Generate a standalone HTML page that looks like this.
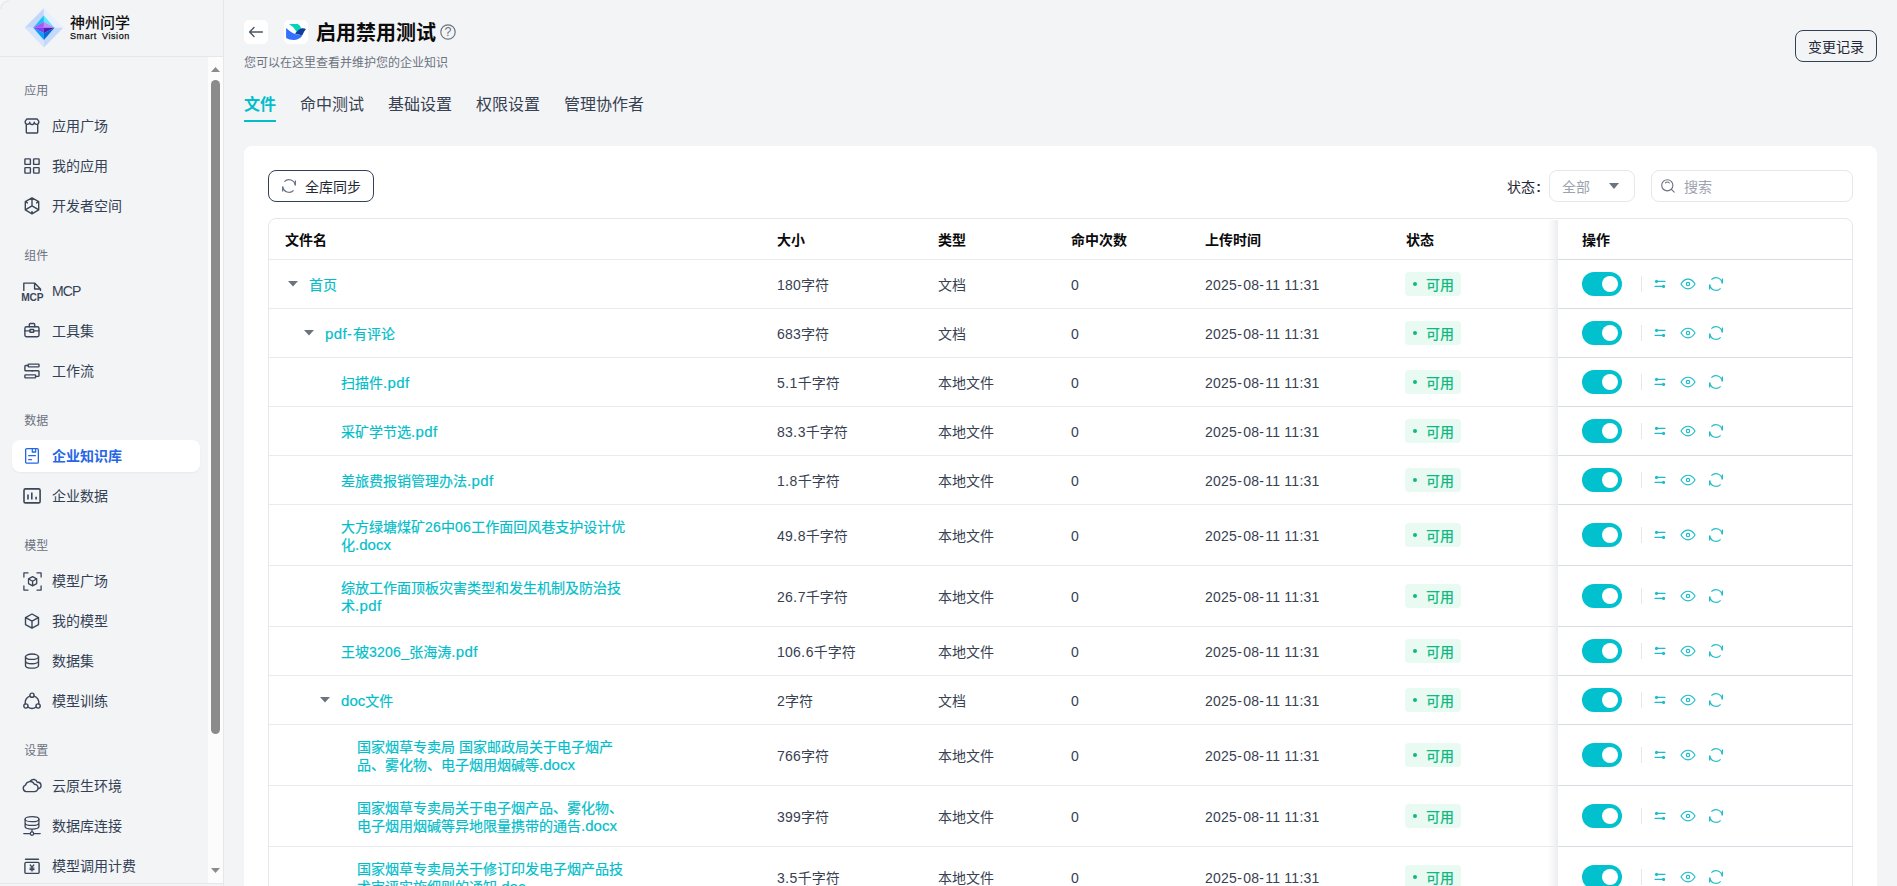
<!DOCTYPE html>
<html lang="zh-CN"><head><meta charset="utf-8"><title>企业知识库 - 启用禁用测试</title>
<style>
*{box-sizing:border-box;margin:0;padding:0}
html,body{width:1897px;height:886px;overflow:hidden;background:#f3f4f6}
body{font-family:"Liberation Sans", "Noto Sans CJK SC", sans-serif;font-size:14px;color:#374151;position:relative}
.a{position:absolute;white-space:nowrap}
svg{display:block;overflow:visible}
.sec{color:#6b7280;font-size:12px;line-height:18px;left:24.3px}
.it{left:52px;font-size:14px;line-height:20px;color:#334155}
.ic{left:24px;width:16px;height:16px;color:#374151}
.tab{font-size:16px;line-height:24px;color:#374151;top:93px}
.th{font-weight:700;color:#0a0a0a;line-height:20px;top:230px;font-size:14px}
.td{line-height:20px;color:#374151}
.nm{line-height:18px;color:#02beca;-webkit-text-stroke:.2px #02beca}
.hl{left:269px;width:1289px;height:1px;background:#e8eaee}
.hr{left:1558px;width:294px;height:1px;background:#d8dbe2}
.tag{left:1405px;width:56px;height:24px;border-radius:4px;background:#e9faf3;color:#10b981;line-height:24px;font-size:14px;font-weight:500}
.tag i{position:absolute;left:8px;top:10px;width:4px;height:4px;border-radius:50%;background:#10b981}
.tag span{position:absolute;left:21px;top:.5px}
.sw{left:1582px;width:40px;height:24px;border-radius:12px;background:#00c1cd}
.sw i{position:absolute;left:20px;top:4px;width:16px;height:16px;border-radius:50%;background:#fff}
.dv{left:1641px;width:1px;height:16px;background:#e5e7eb}
.oi{width:16px;height:16px;color:#1cbcc8}
.car{width:10px;height:5.6px}
.lc{font-size:15px;letter-spacing:.38px}
.lo{letter-spacing:.05px}
.dg{letter-spacing:.25px}
.hy{letter-spacing:1.3px}
</style></head>
<body>
<aside>
<div class="a" style="left:0;top:0;width:224px;height:886px;border-right:1px solid #e5e7eb"></div>
<div class="a" style="left:0;top:56px;width:223px;height:1px;background:#e5e7eb"></div>
<div class="a" style="left:0;top:883px;width:223px;height:1px;background:#e5e7eb"></div>
<div class="a" style="left:0;top:0;width:9px;height:9px;background:radial-gradient(circle at 9px 9px,#f3f4f6 7px,#e6e6e7 8px,#f7f7f7 9.2px)"></div>
<svg class="a" style="left:24px;top:8px" width="40" height="40" viewBox="24 8 40 40">
<polygon points="24.6,27.8 43.9,8.2 43.9,27.8" fill="#c3d6fc"/>
<polygon points="43.9,8.2 63.3,27.8 43.9,27.8" fill="#e8effd"/>
<polygon points="24.6,27.8 43.9,27.8 43.9,47.4" fill="#d6e5fd"/>
<polygon points="43.9,27.8 63.3,27.8 43.9,47.4" fill="#c5d9fc"/>
<polygon points="43.9,15.6 33.2,27.8 43.9,21.8" fill="#0fc3f2"/>
<polygon points="43.9,15.6 54.5,27.8 43.9,21.8" fill="#5ee9fb"/>
<polygon points="33.2,27.8 43.9,21.8 43.9,27.8" fill="#a955f7"/>
<polygon points="43.9,21.8 54.5,27.8 43.9,27.8" fill="#bf8afb"/>
<polygon points="33.2,27.8 43.9,27.8 43.9,33.2" fill="#7c43f0"/>
<polygon points="43.9,27.8 54.5,27.8 43.9,33.2" fill="#4a1fb4"/>
<polygon points="33.2,27.8 43.9,33.2 43.9,39.9" fill="#0a9ff5"/>
<polygon points="43.9,33.2 54.5,27.8 43.9,39.9" fill="#0868d8"/>
</svg>
<div class="a" style="left:70px;top:12.5px;font-size:15px;line-height:20px;font-weight:500;color:#111">神州问学</div>
<div class="a" style="left:70px;top:30px;font-size:9px;line-height:12px;color:#111;letter-spacing:0.58px;word-spacing:2px;-webkit-text-stroke:.25px #111">Smart Vision</div>
<div class="a" style="left:208px;top:57px;width:15px;height:826px;background:#fcfcfc"></div>
<svg class="a" style="left:211px;top:67px" width="9" height="5" viewBox="0 0 9 5"><path d="M0 5 L4.5 0 L9 5Z" fill="#8b8b8b"/></svg>
<svg class="a" style="left:211px;top:868px" width="9" height="5" viewBox="0 0 9 5"><path d="M0 0 L4.5 5 L9 0Z" fill="#8b8b8b"/></svg>
<div class="a" style="left:211px;top:80px;width:9px;height:654px;border-radius:4.5px;background:#8b8b8b"></div>
<div class="a sec" style="top:82px">应用</div>
<div class="a sec" style="top:247px">组件</div>
<div class="a sec" style="top:412px">数据</div>
<div class="a sec" style="top:537px">模型</div>
<div class="a sec" style="top:742px">设置</div>
<div class="a" style="left:12px;top:440px;width:188px;height:32px;border-radius:8px;background:#fff;box-shadow:0 1px 2px rgba(0,0,0,.05)"></div>
<svg class="a" style="left:24px;top:118px;color:#3b4659" width="16" height="16" viewBox="0 0 16 16"><path d="M1.2 3.3 L2.3 1.6 Q2.6 .95 3.3 .95 H12.7 Q13.4 .95 13.7 1.6 L14.8 3.3 V4.3 A2.27 2.27 0 0 1 10.27 4.3 A2.27 2.27 0 0 1 5.73 4.3 A2.27 2.27 0 0 1 1.2 4.3Z M2.3 6.4 V14.3 Q2.3 15 3 15 H13 Q13.7 15 13.7 14.3 V6.4" fill="none" stroke="currentColor" stroke-width="1.4" stroke-linecap="round" stroke-linejoin="round"/></svg>
<div class="a it" style="top:116px">应用广场</div>
<svg class="a" style="left:24px;top:158px;color:#3b4659" width="16" height="16" viewBox="0 0 16 16"><rect x=".9" y=".9" width="5.5" height="5.5" rx=".5" fill="none" stroke="currentColor" stroke-width="1.4" stroke-linecap="round" stroke-linejoin="round"/><rect x="9.6" y=".9" width="5.5" height="5.5" rx=".5" fill="none" stroke="currentColor" stroke-width="1.4" stroke-linecap="round" stroke-linejoin="round"/><rect x=".9" y="9.6" width="5.5" height="5.5" rx=".5" fill="none" stroke="currentColor" stroke-width="1.4" stroke-linecap="round" stroke-linejoin="round"/><rect x="9.6" y="9.6" width="5.5" height="5.5" rx=".5" fill="none" stroke="currentColor" stroke-width="1.4" stroke-linecap="round" stroke-linejoin="round"/></svg>
<div class="a it" style="top:156px">我的应用</div>
<svg class="a" style="left:24px;top:197.1px;color:#3b4659" width="16" height="17.6" viewBox="0 0 16 17.6"><path d="M8 .8 L14.7 4.7 V12.9 L8 16.8 L1.3 12.9 V4.7Z M8 .8 V8.8 M8 8.8 L1.6 12.6 M8 8.8 L14.4 12.6 M8 16.8 V14.4 M1.3 4.7 L3.4 5.9 M14.7 4.7 L12.6 5.9" fill="none" stroke="currentColor" stroke-width="1.4" stroke-linecap="round" stroke-linejoin="round"/></svg>
<div class="a it" style="top:196px">开发者空间</div>
<svg class="a" style="left:21px;top:282px;color:#3b4659" width="23" height="20" viewBox="0 0 23 20"><path d="M2.8 8.4 V1.1 H13.6 L19.5 7 V8.4 M13.6 1.1 V7 H19.5" fill="none" stroke="currentColor" stroke-width="1.4" stroke-linecap="round" stroke-linejoin="round"/><text x="11.3" y="19" text-anchor="middle" font-size="10.2" font-weight="700" fill="currentColor" font-family="&quot;Liberation Sans&quot;, &quot;Noto Sans CJK SC&quot;, sans-serif" letter-spacing="-0.15">MCP</text></svg>
<div class="a it" style="top:281px;letter-spacing:-.9px">MCP</div>
<svg class="a" style="left:24px;top:322px;color:#3b4659" width="16" height="16" viewBox="0 0 16 16"><rect x=".9" y="4.8" width="14.1" height="9.9" rx="1.6" fill="none" stroke="currentColor" stroke-width="1.4" stroke-linecap="round" stroke-linejoin="round"/><path d="M5.3 4.8 V2.6 A1.1 1.1 0 0 1 6.4 1.5 H9.6 A1.1 1.1 0 0 1 10.7 2.6 V4.8 M.9 8.9 H5.9 M9.7 8.9 H15" fill="none" stroke="currentColor" stroke-width="1.4" stroke-linecap="round" stroke-linejoin="round"/><rect x="5.9" y="7.5" width="3.8" height="2.8" rx=".5" fill="none" stroke="currentColor" stroke-width="1.4" stroke-linecap="round" stroke-linejoin="round"/></svg>
<div class="a it" style="top:321px">工具集</div>
<svg class="a" style="left:24px;top:363px;color:#3b4659" width="16" height="16" viewBox="0 0 16 16"><rect x="4.2" y="1.1" width="10.8" height="2.8" rx=".6" fill="none" stroke="currentColor" stroke-width="1.4" stroke-linecap="round" stroke-linejoin="round"/><rect x=".9" y="11.9" width="10.7" height="3" rx=".6" fill="none" stroke="currentColor" stroke-width="1.4" stroke-linecap="round" stroke-linejoin="round"/><path d="M4.2 2.5 H1.7 A.8 .8 0 0 0 .9 3.3 V7 A.8 .8 0 0 0 1.7 7.8 H14.2 A.8 .8 0 0 1 15 8.6 V12.6 A.8 .8 0 0 1 14.2 13.4 H11.6" fill="none" stroke="currentColor" stroke-width="1.4" stroke-linecap="round" stroke-linejoin="round"/><circle cx="8.2" cy="7.8" r=".9" fill="currentColor"/></svg>
<div class="a it" style="top:361px">工作流</div>
<svg class="a" style="left:24px;top:447px;color:#2466e6" width="16" height="18" viewBox="0 0 16 18"><rect x="1.65" y="1.55" width="12.7" height="14.6" rx="1.2" fill="none" stroke="currentColor" stroke-width="1.3" stroke-linecap="round" stroke-linejoin="round"/><path d="M8.3 1.6 V5 H11.6 V1.6 M4.7 8.7 H11.4 M4.7 12.7 H7.5" fill="none" stroke="currentColor" stroke-width="1.3" stroke-linecap="round" stroke-linejoin="round"/></svg>
<div class="a it" style="top:446px;color:#2466e6;font-weight:700">企业知识库</div>
<svg class="a" style="left:23px;top:488px;color:#3b4659" width="18" height="16" viewBox="0 0 18 16"><rect x="1" y=".9" width="16.1" height="14" rx="1.5" fill="none" stroke="currentColor" stroke-width="1.6" stroke-linecap="butt" stroke-linejoin="round"/><path d="M5 6.6 V11.6 M8.8 4.4 V11.6 M13.1 8.8 V11.6" fill="none" stroke="currentColor" stroke-width="1.6" stroke-linecap="butt" stroke-linejoin="round"/></svg>
<div class="a it" style="top:486px">企业数据</div>
<svg class="a" style="left:22.5px;top:571.5px;color:#3b4659" width="19" height="19" viewBox="0 0 19 19"><path d="M.9 5 V.9 H5 M14 .9 H18.1 V5 M18.1 14 V18.1 H14 M5 18.1 H.9 V14" fill="none" stroke="currentColor" stroke-width="1.3" stroke-linecap="round" stroke-linejoin="round"/><path d="M9.6 4.6 L13.7 6.9 V11.6 L9.6 13.9 L5.5 11.6 V6.9Z M5.7 7 L9.6 9.2 L13.5 7 M9.6 9.2 V13.8" fill="none" stroke="currentColor" stroke-width="1.3" stroke-linecap="round" stroke-linejoin="round"/></svg>
<div class="a it" style="top:571px">模型广场</div>
<svg class="a" style="left:24px;top:613px;color:#3b4659" width="16" height="16" viewBox="0 0 16 16"><path d="M8 1 L14.5 4.6 V11.6 L8 15.2 L1.5 11.6 V4.6Z M1.7 4.7 L8 8.2 L14.3 4.7 M8 8.2 V15.1" fill="none" stroke="currentColor" stroke-width="1.4" stroke-linecap="round" stroke-linejoin="round"/></svg>
<div class="a it" style="top:611px">我的模型</div>
<svg class="a" style="left:24px;top:653px;color:#3b4659" width="16" height="16" viewBox="0 0 16 16"><ellipse cx="8" cy="3.7" rx="6.5" ry="2.7" fill="none" stroke="currentColor" stroke-width="1.4" stroke-linecap="round" stroke-linejoin="round"/><path d="M1.5 3.7 V12.4 C1.5 13.9 4.4 15.1 8 15.1 S14.5 13.9 14.5 12.4 V3.7 M1.5 8 C1.5 9.5 4.4 10.7 8 10.7 S14.5 9.5 14.5 8" fill="none" stroke="currentColor" stroke-width="1.4" stroke-linecap="round" stroke-linejoin="round"/></svg>
<div class="a it" style="top:651px">数据集</div>
<svg class="a" style="left:23px;top:692px;color:#3b4659" width="18" height="18" viewBox="0 0 18 18"><circle cx="9" cy="3.2" r="2.1" fill="none" stroke="currentColor" stroke-width="1.4" stroke-linecap="round" stroke-linejoin="round"/><circle cx="2.9" cy="14" r="2.1" fill="none" stroke="currentColor" stroke-width="1.4" stroke-linecap="round" stroke-linejoin="round"/><circle cx="15.1" cy="14" r="2.1" fill="none" stroke="currentColor" stroke-width="1.4" stroke-linecap="round" stroke-linejoin="round"/><path d="M7.1 4.2 A7.4 7.4 0 0 0 2.2 12 M10.9 4.2 A7.4 7.4 0 0 1 15.8 12 M4.8 15 A7.4 7.4 0 0 0 13.2 15" fill="none" stroke="currentColor" stroke-width="1.4" stroke-linecap="round" stroke-linejoin="round"/></svg>
<div class="a it" style="top:691px">模型训练</div>
<svg class="a" style="left:22px;top:778px;color:#3b4659" width="20" height="15" viewBox="0 0 20 15"><path d="M4.2 13.6 A3.3 3.3 0 0 1 3.5 7.2 A4.7 4.7 0 0 1 12.3 6.2 A3.7 3.7 0 0 1 12.4 13.6 Z" fill="none" stroke="currentColor" stroke-width="1.4" stroke-linecap="round" stroke-linejoin="round"/><path d="M8.4 3 A3.9 3.9 0 0 1 15.3 4.4 A3.1 3.1 0 0 1 16.4 10.6" fill="none" stroke="currentColor" stroke-width="1.4" stroke-linecap="round" stroke-linejoin="round"/></svg>
<div class="a it" style="top:776px">云原生环境</div>
<svg class="a" style="left:23px;top:815.5px;color:#3b4659" width="18" height="20" viewBox="0 0 18 20"><ellipse cx="9" cy="3.2" rx="6.9" ry="2.5" fill="none" stroke="currentColor" stroke-width="1.3" stroke-linecap="round" stroke-linejoin="round"/><path d="M2.1 3.2 V10.6 C2.1 12 5.2 13.1 9 13.1 S15.9 12 15.9 10.6 V3.2 M2.1 6.9 C2.1 8.3 5.2 9.4 9 9.4 S15.9 8.3 15.9 6.9 M9 13.1 V15.6 M.8 17.6 H7.2 M10.8 17.6 H17.2" fill="none" stroke="currentColor" stroke-width="1.3" stroke-linecap="round" stroke-linejoin="round"/><circle cx="9" cy="17.6" r="1.7" fill="none" stroke="currentColor" stroke-width="1.3" stroke-linecap="round" stroke-linejoin="round"/></svg>
<div class="a it" style="top:816px">数据库连接</div>
<svg class="a" style="left:24px;top:857.5px;color:#3b4659" width="16" height="17" viewBox="0 0 16 17"><path d="M1.5 1.2 H14.5" fill="none" stroke="currentColor" stroke-width="1.4" stroke-linecap="round" stroke-linejoin="round"/><rect x=".9" y="4.4" width="14.2" height="11" rx="1.2" fill="none" stroke="currentColor" stroke-width="1.4" stroke-linecap="round" stroke-linejoin="round"/><path d="M6.2 7 L8 9.2 L9.8 7 M8 9.2 V13 M6 10 H10 M6 11.6 H10" fill="none" stroke="currentColor" stroke-width="1.25" stroke-linecap="round" stroke-linejoin="round"/></svg>
<div class="a it" style="top:856px">模型调用计费</div>
</aside>
<header>
<div class="a" style="left:244px;top:20px;width:24px;height:24px;border-radius:5px;background:#fff"></div>
<svg class="a" style="left:248px;top:24px;color:#4b5563" width="16" height="16" viewBox="0 0 16 16"><path d="M14.4 8 H1.9 M6 3.6 L1.6 8 L6 12.4" fill="none" stroke="currentColor" stroke-width="1.4" stroke-linecap="round" stroke-linejoin="round"/></svg>
<div class="a" style="left:284px;top:20px;width:24px;height:24px;border-radius:5px;background:#fff"></div>
<svg class="a" style="left:284px;top:20px" width="24" height="24" viewBox="284 20 24 24">
<path d="M289 24 H297.6 C299.4 24.6 300.6 26.6 301.2 28.6 C299.8 29.4 298.2 30.6 296.6 32 C295 28.8 292.4 26 289 24Z" fill="#00d6b9"/>
<path d="M286.1 28.1 C288.6 30.6 292 33 295.2 34 C297.8 34.8 300.4 34.8 302.4 35.4 C300.6 38.2 297.2 39.9 293.6 39.9 C290.8 39.9 288.2 39.2 286.1 37.9Z" fill="#3370ff"/>
<path d="M306 29.1 C304.8 28.4 303.2 28.1 301.8 28.3 C299.4 28.7 297.2 31 295 33.6 C297.2 34.6 300 35 302.3 35.3 C303.4 33.4 304.4 30.8 306 29.1Z" fill="#133c9a"/>
</svg>
<div class="a" style="left:316px;top:19px;font-size:20px;line-height:28px;font-weight:700;color:#0b0b0b">启用禁用测试</div>
<svg class="a" style="left:440px;top:24px;color:#6b7280" width="16" height="16" viewBox="0 0 16 16"><circle cx="8" cy="8" r="7.2" fill="none" stroke="currentColor" stroke-width="1.2"/><text x="8" y="12.4" text-anchor="middle" font-size="12.5" fill="currentColor" font-family="Liberation Sans, sans-serif">?</text></svg>
<div class="a" style="left:244px;top:54px;font-size:12px;line-height:18px;color:#6b7280">您可以在这里查看并维护您的企业知识</div>
<div class="a" style="left:1795px;top:30px;width:82px;height:32px;border:1px solid #334155;border-radius:8px;font-size:14px;line-height:32px;text-align:center;color:#1f2937">变更记录</div>
<div class="a tab" style="left:244px;color:#00bfcb;font-weight:700">文件</div>
<div class="a" style="left:244px;top:120px;width:32px;height:2px;background:#00bfcb"></div>
<div class="a tab" style="left:300px">命中测试</div>
<div class="a tab" style="left:388px">基础设置</div>
<div class="a tab" style="left:476px">权限设置</div>
<div class="a tab" style="left:564px">管理协作者</div>
</header>
<main>
<div class="a" style="left:244px;top:146px;width:1633px;height:760px;border-radius:8px;background:#fff"></div>
<div class="a" style="left:268px;top:170px;width:106px;height:32px;border:1px solid #334155;border-radius:8px"></div>
<svg class="a" style="left:281px;top:177.8px;color:#64748b" width="16" height="16" viewBox="0 0 16 16"><path d="M3.4 3.6 A6.2 6.2 0 0 1 14.1 7.4 M14.4 2.5 V7.6 M12.6 12.4 A6.2 6.2 0 0 1 1.9 8.6 M1.6 13.5 V8.4" fill="none" stroke="currentColor" stroke-width="1.2" stroke-linecap="butt" stroke-linejoin="miter"/></svg>
<div class="a" style="left:305px;top:177px;line-height:20px;color:#1f2937">全库同步</div>
<div class="a" style="left:1507px;top:177px;line-height:20px;color:#1f2937">状态<span style="margin-left:1.3px;font-weight:700">:</span></div>
<div class="a" style="left:1549px;top:170px;width:86px;height:32px;border:1px solid #e5e7eb;border-radius:8px"></div>
<div class="a" style="left:1562px;top:177px;line-height:20px;color:#9ca3af">全部</div>
<svg class="a" style="left:1609px;top:183px" width="10" height="6" viewBox="0 0 10 6"><path d="M0 0 H10 L5 6Z" fill="#6b7280"/></svg>
<div class="a" style="left:1651px;top:170px;width:202px;height:32px;border:1px solid #e5e7eb;border-radius:8px"></div>
<svg class="a" style="left:1661px;top:179px;color:#6b7280" width="14" height="14" viewBox="0 0 14 14"><circle cx="6.3" cy="6.3" r="5.6" fill="none" stroke="currentColor" stroke-width="1.1"/><path d="M10.4 10.4 L13.2 13.2 M4.5 3.9 A2.6 2.6 0 0 1 8.3 3.9" fill="none" stroke="currentColor" stroke-width="1.1" stroke-linecap="round"/></svg>
<div class="a" style="left:1684px;top:177px;line-height:20px;color:#9ca3af">搜索</div>
<div class="a" style="left:268px;top:218px;width:1585px;height:700px;border:1px solid #e5e7eb;border-radius:8px"></div>
<div class="a" style="left:1548px;top:220px;width:10px;height:666px;background:linear-gradient(to right,rgba(30,41,80,0),rgba(30,41,80,.03) 40%,rgba(30,41,80,.09))"></div>
<div class="a th" style="left:285px">文件名</div>
<div class="a th" style="left:777px">大小</div>
<div class="a th" style="left:938px">类型</div>
<div class="a th" style="left:1071px">命中次数</div>
<div class="a th" style="left:1205px">上传时间</div>
<div class="a th" style="left:1406px">状态</div>
<div class="a th" style="left:1582px">操作</div>
<div class="a hl" style="top:259px"></div><div class="a hr" style="top:259px"></div>
<div role="row">
<svg class="a car" style="left:288px;top:281px" viewBox="0 0 10 5.6" preserveAspectRatio="none"><path d="M0 0 H10 L5 5.6Z" fill="#6b7280"/></svg>
<div class="a nm" style="left:309px;top:276px">首页</div>
<div class="a td" style="left:777px;top:275px"><span class="dg">180</span>字符</div>
<div class="a td" style="left:938px;top:275px">文档</div>
<div class="a td" style="left:1071px;top:275px"><span class="dg">0</span></div>
<div class="a td" style="left:1205px;top:275px"><span class="dg">2025</span><span class="hy">-</span><span class="dg">08</span><span class="hy">-</span><span class="dg">11 11:31</span></div>
<div class="a tag" style="top:272px"><i></i><span>可用</span></div>
<div class="a sw" style="top:272px"><i></i></div>
<div class="a dv" style="top:276px"></div>
<svg class="a oi" style="left:1652px;top:276px" viewBox="0 0 16 16"><path d="M4.6 5.4 H13 M3 10.4 H11.4" fill="none" stroke="currentColor" stroke-width="1.1" stroke-linecap="round"/><circle cx="4.5" cy="5.4" r="1.55" fill="currentColor"/><circle cx="11.6" cy="10.4" r="1.55" fill="currentColor"/></svg>
<svg class="a oi" style="left:1680px;top:276px" viewBox="0 0 16 16"><path d="M1 8 C3 4.6 5.4 3.2 8 3.2 S13 4.6 15 8 C13 11.4 10.6 12.8 8 12.8 S3 11.4 1 8Z" fill="none" stroke="currentColor" stroke-width="1.15"/><circle cx="8" cy="8" r="1.7" fill="none" stroke="currentColor" stroke-width="1.15"/></svg>
<svg class="a oi" style="left:1708px;top:276px" viewBox="0 0 16 16"><path d="M3.4 3.6 A6.2 6.2 0 0 1 14.1 7.4 M14.4 2.5 V7.6 M12.6 12.4 A6.2 6.2 0 0 1 1.9 8.6 M1.6 13.5 V8.4" fill="none" stroke="currentColor" stroke-width="1.15" stroke-linecap="butt" stroke-linejoin="miter"/></svg>
<div class="a hl" style="top:308px"></div><div class="a hr" style="top:308px"></div>
</div>
<div role="row">
<svg class="a car" style="left:304px;top:330px" viewBox="0 0 10 5.6" preserveAspectRatio="none"><path d="M0 0 H10 L5 5.6Z" fill="#6b7280"/></svg>
<div class="a nm" style="left:325px;top:325px"><span class="lc">pdf</span><span class="hy">-</span>有评论</div>
<div class="a td" style="left:777px;top:324px"><span class="dg">683</span>字符</div>
<div class="a td" style="left:938px;top:324px">文档</div>
<div class="a td" style="left:1071px;top:324px"><span class="dg">0</span></div>
<div class="a td" style="left:1205px;top:324px"><span class="dg">2025</span><span class="hy">-</span><span class="dg">08</span><span class="hy">-</span><span class="dg">11 11:31</span></div>
<div class="a tag" style="top:321px"><i></i><span>可用</span></div>
<div class="a sw" style="top:321px"><i></i></div>
<div class="a dv" style="top:325px"></div>
<svg class="a oi" style="left:1652px;top:325px" viewBox="0 0 16 16"><path d="M4.6 5.4 H13 M3 10.4 H11.4" fill="none" stroke="currentColor" stroke-width="1.1" stroke-linecap="round"/><circle cx="4.5" cy="5.4" r="1.55" fill="currentColor"/><circle cx="11.6" cy="10.4" r="1.55" fill="currentColor"/></svg>
<svg class="a oi" style="left:1680px;top:325px" viewBox="0 0 16 16"><path d="M1 8 C3 4.6 5.4 3.2 8 3.2 S13 4.6 15 8 C13 11.4 10.6 12.8 8 12.8 S3 11.4 1 8Z" fill="none" stroke="currentColor" stroke-width="1.15"/><circle cx="8" cy="8" r="1.7" fill="none" stroke="currentColor" stroke-width="1.15"/></svg>
<svg class="a oi" style="left:1708px;top:325px" viewBox="0 0 16 16"><path d="M3.4 3.6 A6.2 6.2 0 0 1 14.1 7.4 M14.4 2.5 V7.6 M12.6 12.4 A6.2 6.2 0 0 1 1.9 8.6 M1.6 13.5 V8.4" fill="none" stroke="currentColor" stroke-width="1.15" stroke-linecap="butt" stroke-linejoin="miter"/></svg>
<div class="a hl" style="top:357px"></div><div class="a hr" style="top:357px"></div>
</div>
<div role="row">
<div class="a nm" style="left:341px;top:374px">扫描件<span class="lc">.pdf</span></div>
<div class="a td" style="left:777px;top:373px"><span class="dg">5</span><span class="lc">.</span><span class="dg">1</span>千字符</div>
<div class="a td" style="left:938px;top:373px">本地文件</div>
<div class="a td" style="left:1071px;top:373px"><span class="dg">0</span></div>
<div class="a td" style="left:1205px;top:373px"><span class="dg">2025</span><span class="hy">-</span><span class="dg">08</span><span class="hy">-</span><span class="dg">11 11:31</span></div>
<div class="a tag" style="top:370px"><i></i><span>可用</span></div>
<div class="a sw" style="top:370px"><i></i></div>
<div class="a dv" style="top:374px"></div>
<svg class="a oi" style="left:1652px;top:374px" viewBox="0 0 16 16"><path d="M4.6 5.4 H13 M3 10.4 H11.4" fill="none" stroke="currentColor" stroke-width="1.1" stroke-linecap="round"/><circle cx="4.5" cy="5.4" r="1.55" fill="currentColor"/><circle cx="11.6" cy="10.4" r="1.55" fill="currentColor"/></svg>
<svg class="a oi" style="left:1680px;top:374px" viewBox="0 0 16 16"><path d="M1 8 C3 4.6 5.4 3.2 8 3.2 S13 4.6 15 8 C13 11.4 10.6 12.8 8 12.8 S3 11.4 1 8Z" fill="none" stroke="currentColor" stroke-width="1.15"/><circle cx="8" cy="8" r="1.7" fill="none" stroke="currentColor" stroke-width="1.15"/></svg>
<svg class="a oi" style="left:1708px;top:374px" viewBox="0 0 16 16"><path d="M3.4 3.6 A6.2 6.2 0 0 1 14.1 7.4 M14.4 2.5 V7.6 M12.6 12.4 A6.2 6.2 0 0 1 1.9 8.6 M1.6 13.5 V8.4" fill="none" stroke="currentColor" stroke-width="1.15" stroke-linecap="butt" stroke-linejoin="miter"/></svg>
<div class="a hl" style="top:406px"></div><div class="a hr" style="top:406px"></div>
</div>
<div role="row">
<div class="a nm" style="left:341px;top:423px">采矿学节选<span class="lc">.pdf</span></div>
<div class="a td" style="left:777px;top:422px"><span class="dg">83</span><span class="lc">.</span><span class="dg">3</span>千字符</div>
<div class="a td" style="left:938px;top:422px">本地文件</div>
<div class="a td" style="left:1071px;top:422px"><span class="dg">0</span></div>
<div class="a td" style="left:1205px;top:422px"><span class="dg">2025</span><span class="hy">-</span><span class="dg">08</span><span class="hy">-</span><span class="dg">11 11:31</span></div>
<div class="a tag" style="top:419px"><i></i><span>可用</span></div>
<div class="a sw" style="top:419px"><i></i></div>
<div class="a dv" style="top:423px"></div>
<svg class="a oi" style="left:1652px;top:423px" viewBox="0 0 16 16"><path d="M4.6 5.4 H13 M3 10.4 H11.4" fill="none" stroke="currentColor" stroke-width="1.1" stroke-linecap="round"/><circle cx="4.5" cy="5.4" r="1.55" fill="currentColor"/><circle cx="11.6" cy="10.4" r="1.55" fill="currentColor"/></svg>
<svg class="a oi" style="left:1680px;top:423px" viewBox="0 0 16 16"><path d="M1 8 C3 4.6 5.4 3.2 8 3.2 S13 4.6 15 8 C13 11.4 10.6 12.8 8 12.8 S3 11.4 1 8Z" fill="none" stroke="currentColor" stroke-width="1.15"/><circle cx="8" cy="8" r="1.7" fill="none" stroke="currentColor" stroke-width="1.15"/></svg>
<svg class="a oi" style="left:1708px;top:423px" viewBox="0 0 16 16"><path d="M3.4 3.6 A6.2 6.2 0 0 1 14.1 7.4 M14.4 2.5 V7.6 M12.6 12.4 A6.2 6.2 0 0 1 1.9 8.6 M1.6 13.5 V8.4" fill="none" stroke="currentColor" stroke-width="1.15" stroke-linecap="butt" stroke-linejoin="miter"/></svg>
<div class="a hl" style="top:455px"></div><div class="a hr" style="top:455px"></div>
</div>
<div role="row">
<div class="a nm" style="left:341px;top:472px">差旅费报销管理办法<span class="lc">.pdf</span></div>
<div class="a td" style="left:777px;top:471px"><span class="dg">1</span><span class="lc">.</span><span class="dg">8</span>千字符</div>
<div class="a td" style="left:938px;top:471px">本地文件</div>
<div class="a td" style="left:1071px;top:471px"><span class="dg">0</span></div>
<div class="a td" style="left:1205px;top:471px"><span class="dg">2025</span><span class="hy">-</span><span class="dg">08</span><span class="hy">-</span><span class="dg">11 11:31</span></div>
<div class="a tag" style="top:468px"><i></i><span>可用</span></div>
<div class="a sw" style="top:468px"><i></i></div>
<div class="a dv" style="top:472px"></div>
<svg class="a oi" style="left:1652px;top:472px" viewBox="0 0 16 16"><path d="M4.6 5.4 H13 M3 10.4 H11.4" fill="none" stroke="currentColor" stroke-width="1.1" stroke-linecap="round"/><circle cx="4.5" cy="5.4" r="1.55" fill="currentColor"/><circle cx="11.6" cy="10.4" r="1.55" fill="currentColor"/></svg>
<svg class="a oi" style="left:1680px;top:472px" viewBox="0 0 16 16"><path d="M1 8 C3 4.6 5.4 3.2 8 3.2 S13 4.6 15 8 C13 11.4 10.6 12.8 8 12.8 S3 11.4 1 8Z" fill="none" stroke="currentColor" stroke-width="1.15"/><circle cx="8" cy="8" r="1.7" fill="none" stroke="currentColor" stroke-width="1.15"/></svg>
<svg class="a oi" style="left:1708px;top:472px" viewBox="0 0 16 16"><path d="M3.4 3.6 A6.2 6.2 0 0 1 14.1 7.4 M14.4 2.5 V7.6 M12.6 12.4 A6.2 6.2 0 0 1 1.9 8.6 M1.6 13.5 V8.4" fill="none" stroke="currentColor" stroke-width="1.15" stroke-linecap="butt" stroke-linejoin="miter"/></svg>
<div class="a hl" style="top:504px"></div><div class="a hr" style="top:504px"></div>
</div>
<div role="row">
<div class="a nm" style="left:341px;top:518px">大方绿塘煤矿<span class="dg">26</span>中<span class="dg">06</span>工作面回风巷支护设计优<br>化<span class="lc lo">.docx</span></div>
<div class="a td" style="left:777px;top:526px"><span class="dg">49</span><span class="lc">.</span><span class="dg">8</span>千字符</div>
<div class="a td" style="left:938px;top:526px">本地文件</div>
<div class="a td" style="left:1071px;top:526px"><span class="dg">0</span></div>
<div class="a td" style="left:1205px;top:526px"><span class="dg">2025</span><span class="hy">-</span><span class="dg">08</span><span class="hy">-</span><span class="dg">11 11:31</span></div>
<div class="a tag" style="top:523px"><i></i><span>可用</span></div>
<div class="a sw" style="top:523px"><i></i></div>
<div class="a dv" style="top:527px"></div>
<svg class="a oi" style="left:1652px;top:527px" viewBox="0 0 16 16"><path d="M4.6 5.4 H13 M3 10.4 H11.4" fill="none" stroke="currentColor" stroke-width="1.1" stroke-linecap="round"/><circle cx="4.5" cy="5.4" r="1.55" fill="currentColor"/><circle cx="11.6" cy="10.4" r="1.55" fill="currentColor"/></svg>
<svg class="a oi" style="left:1680px;top:527px" viewBox="0 0 16 16"><path d="M1 8 C3 4.6 5.4 3.2 8 3.2 S13 4.6 15 8 C13 11.4 10.6 12.8 8 12.8 S3 11.4 1 8Z" fill="none" stroke="currentColor" stroke-width="1.15"/><circle cx="8" cy="8" r="1.7" fill="none" stroke="currentColor" stroke-width="1.15"/></svg>
<svg class="a oi" style="left:1708px;top:527px" viewBox="0 0 16 16"><path d="M3.4 3.6 A6.2 6.2 0 0 1 14.1 7.4 M14.4 2.5 V7.6 M12.6 12.4 A6.2 6.2 0 0 1 1.9 8.6 M1.6 13.5 V8.4" fill="none" stroke="currentColor" stroke-width="1.15" stroke-linecap="butt" stroke-linejoin="miter"/></svg>
<div class="a hl" style="top:565px"></div><div class="a hr" style="top:565px"></div>
</div>
<div role="row">
<div class="a nm" style="left:341px;top:579px">综放工作面顶板灾害类型和发生机制及防治技<br>术<span class="lc">.pdf</span></div>
<div class="a td" style="left:777px;top:587px"><span class="dg">26</span><span class="lc">.</span><span class="dg">7</span>千字符</div>
<div class="a td" style="left:938px;top:587px">本地文件</div>
<div class="a td" style="left:1071px;top:587px"><span class="dg">0</span></div>
<div class="a td" style="left:1205px;top:587px"><span class="dg">2025</span><span class="hy">-</span><span class="dg">08</span><span class="hy">-</span><span class="dg">11 11:31</span></div>
<div class="a tag" style="top:584px"><i></i><span>可用</span></div>
<div class="a sw" style="top:584px"><i></i></div>
<div class="a dv" style="top:588px"></div>
<svg class="a oi" style="left:1652px;top:588px" viewBox="0 0 16 16"><path d="M4.6 5.4 H13 M3 10.4 H11.4" fill="none" stroke="currentColor" stroke-width="1.1" stroke-linecap="round"/><circle cx="4.5" cy="5.4" r="1.55" fill="currentColor"/><circle cx="11.6" cy="10.4" r="1.55" fill="currentColor"/></svg>
<svg class="a oi" style="left:1680px;top:588px" viewBox="0 0 16 16"><path d="M1 8 C3 4.6 5.4 3.2 8 3.2 S13 4.6 15 8 C13 11.4 10.6 12.8 8 12.8 S3 11.4 1 8Z" fill="none" stroke="currentColor" stroke-width="1.15"/><circle cx="8" cy="8" r="1.7" fill="none" stroke="currentColor" stroke-width="1.15"/></svg>
<svg class="a oi" style="left:1708px;top:588px" viewBox="0 0 16 16"><path d="M3.4 3.6 A6.2 6.2 0 0 1 14.1 7.4 M14.4 2.5 V7.6 M12.6 12.4 A6.2 6.2 0 0 1 1.9 8.6 M1.6 13.5 V8.4" fill="none" stroke="currentColor" stroke-width="1.15" stroke-linecap="butt" stroke-linejoin="miter"/></svg>
<div class="a hl" style="top:626px"></div><div class="a hr" style="top:626px"></div>
</div>
<div role="row">
<div class="a nm" style="left:341px;top:643px">王坡<span class="dg">3206_</span>张海涛<span class="lc">.pdf</span></div>
<div class="a td" style="left:777px;top:642px"><span class="dg">106</span><span class="lc">.</span><span class="dg">6</span>千字符</div>
<div class="a td" style="left:938px;top:642px">本地文件</div>
<div class="a td" style="left:1071px;top:642px"><span class="dg">0</span></div>
<div class="a td" style="left:1205px;top:642px"><span class="dg">2025</span><span class="hy">-</span><span class="dg">08</span><span class="hy">-</span><span class="dg">11 11:31</span></div>
<div class="a tag" style="top:639px"><i></i><span>可用</span></div>
<div class="a sw" style="top:639px"><i></i></div>
<div class="a dv" style="top:643px"></div>
<svg class="a oi" style="left:1652px;top:643px" viewBox="0 0 16 16"><path d="M4.6 5.4 H13 M3 10.4 H11.4" fill="none" stroke="currentColor" stroke-width="1.1" stroke-linecap="round"/><circle cx="4.5" cy="5.4" r="1.55" fill="currentColor"/><circle cx="11.6" cy="10.4" r="1.55" fill="currentColor"/></svg>
<svg class="a oi" style="left:1680px;top:643px" viewBox="0 0 16 16"><path d="M1 8 C3 4.6 5.4 3.2 8 3.2 S13 4.6 15 8 C13 11.4 10.6 12.8 8 12.8 S3 11.4 1 8Z" fill="none" stroke="currentColor" stroke-width="1.15"/><circle cx="8" cy="8" r="1.7" fill="none" stroke="currentColor" stroke-width="1.15"/></svg>
<svg class="a oi" style="left:1708px;top:643px" viewBox="0 0 16 16"><path d="M3.4 3.6 A6.2 6.2 0 0 1 14.1 7.4 M14.4 2.5 V7.6 M12.6 12.4 A6.2 6.2 0 0 1 1.9 8.6 M1.6 13.5 V8.4" fill="none" stroke="currentColor" stroke-width="1.15" stroke-linecap="butt" stroke-linejoin="miter"/></svg>
<div class="a hl" style="top:675px"></div><div class="a hr" style="top:675px"></div>
</div>
<div role="row">
<svg class="a car" style="left:320px;top:697px" viewBox="0 0 10 5.6" preserveAspectRatio="none"><path d="M0 0 H10 L5 5.6Z" fill="#6b7280"/></svg>
<div class="a nm" style="left:341px;top:692px"><span class="lc lo">doc</span>文件</div>
<div class="a td" style="left:777px;top:691px"><span class="dg">2</span>字符</div>
<div class="a td" style="left:938px;top:691px">文档</div>
<div class="a td" style="left:1071px;top:691px"><span class="dg">0</span></div>
<div class="a td" style="left:1205px;top:691px"><span class="dg">2025</span><span class="hy">-</span><span class="dg">08</span><span class="hy">-</span><span class="dg">11 11:31</span></div>
<div class="a tag" style="top:688px"><i></i><span>可用</span></div>
<div class="a sw" style="top:688px"><i></i></div>
<div class="a dv" style="top:692px"></div>
<svg class="a oi" style="left:1652px;top:692px" viewBox="0 0 16 16"><path d="M4.6 5.4 H13 M3 10.4 H11.4" fill="none" stroke="currentColor" stroke-width="1.1" stroke-linecap="round"/><circle cx="4.5" cy="5.4" r="1.55" fill="currentColor"/><circle cx="11.6" cy="10.4" r="1.55" fill="currentColor"/></svg>
<svg class="a oi" style="left:1680px;top:692px" viewBox="0 0 16 16"><path d="M1 8 C3 4.6 5.4 3.2 8 3.2 S13 4.6 15 8 C13 11.4 10.6 12.8 8 12.8 S3 11.4 1 8Z" fill="none" stroke="currentColor" stroke-width="1.15"/><circle cx="8" cy="8" r="1.7" fill="none" stroke="currentColor" stroke-width="1.15"/></svg>
<svg class="a oi" style="left:1708px;top:692px" viewBox="0 0 16 16"><path d="M3.4 3.6 A6.2 6.2 0 0 1 14.1 7.4 M14.4 2.5 V7.6 M12.6 12.4 A6.2 6.2 0 0 1 1.9 8.6 M1.6 13.5 V8.4" fill="none" stroke="currentColor" stroke-width="1.15" stroke-linecap="butt" stroke-linejoin="miter"/></svg>
<div class="a hl" style="top:724px"></div><div class="a hr" style="top:724px"></div>
</div>
<div role="row">
<div class="a nm" style="left:357px;top:738px">国家烟草专卖局 国家邮政局关于电子烟产<br>品、雾化物、电子烟用烟碱等<span class="lc lo">.docx</span></div>
<div class="a td" style="left:777px;top:746px"><span class="dg">766</span>字符</div>
<div class="a td" style="left:938px;top:746px">本地文件</div>
<div class="a td" style="left:1071px;top:746px"><span class="dg">0</span></div>
<div class="a td" style="left:1205px;top:746px"><span class="dg">2025</span><span class="hy">-</span><span class="dg">08</span><span class="hy">-</span><span class="dg">11 11:31</span></div>
<div class="a tag" style="top:743px"><i></i><span>可用</span></div>
<div class="a sw" style="top:743px"><i></i></div>
<div class="a dv" style="top:747px"></div>
<svg class="a oi" style="left:1652px;top:747px" viewBox="0 0 16 16"><path d="M4.6 5.4 H13 M3 10.4 H11.4" fill="none" stroke="currentColor" stroke-width="1.1" stroke-linecap="round"/><circle cx="4.5" cy="5.4" r="1.55" fill="currentColor"/><circle cx="11.6" cy="10.4" r="1.55" fill="currentColor"/></svg>
<svg class="a oi" style="left:1680px;top:747px" viewBox="0 0 16 16"><path d="M1 8 C3 4.6 5.4 3.2 8 3.2 S13 4.6 15 8 C13 11.4 10.6 12.8 8 12.8 S3 11.4 1 8Z" fill="none" stroke="currentColor" stroke-width="1.15"/><circle cx="8" cy="8" r="1.7" fill="none" stroke="currentColor" stroke-width="1.15"/></svg>
<svg class="a oi" style="left:1708px;top:747px" viewBox="0 0 16 16"><path d="M3.4 3.6 A6.2 6.2 0 0 1 14.1 7.4 M14.4 2.5 V7.6 M12.6 12.4 A6.2 6.2 0 0 1 1.9 8.6 M1.6 13.5 V8.4" fill="none" stroke="currentColor" stroke-width="1.15" stroke-linecap="butt" stroke-linejoin="miter"/></svg>
<div class="a hl" style="top:785px"></div><div class="a hr" style="top:785px"></div>
</div>
<div role="row">
<div class="a nm" style="left:357px;top:799px">国家烟草专卖局关于电子烟产品、雾化物、<br>电子烟用烟碱等异地限量携带的通告<span class="lc lo">.docx</span></div>
<div class="a td" style="left:777px;top:807px"><span class="dg">399</span>字符</div>
<div class="a td" style="left:938px;top:807px">本地文件</div>
<div class="a td" style="left:1071px;top:807px"><span class="dg">0</span></div>
<div class="a td" style="left:1205px;top:807px"><span class="dg">2025</span><span class="hy">-</span><span class="dg">08</span><span class="hy">-</span><span class="dg">11 11:31</span></div>
<div class="a tag" style="top:804px"><i></i><span>可用</span></div>
<div class="a sw" style="top:804px"><i></i></div>
<div class="a dv" style="top:808px"></div>
<svg class="a oi" style="left:1652px;top:808px" viewBox="0 0 16 16"><path d="M4.6 5.4 H13 M3 10.4 H11.4" fill="none" stroke="currentColor" stroke-width="1.1" stroke-linecap="round"/><circle cx="4.5" cy="5.4" r="1.55" fill="currentColor"/><circle cx="11.6" cy="10.4" r="1.55" fill="currentColor"/></svg>
<svg class="a oi" style="left:1680px;top:808px" viewBox="0 0 16 16"><path d="M1 8 C3 4.6 5.4 3.2 8 3.2 S13 4.6 15 8 C13 11.4 10.6 12.8 8 12.8 S3 11.4 1 8Z" fill="none" stroke="currentColor" stroke-width="1.15"/><circle cx="8" cy="8" r="1.7" fill="none" stroke="currentColor" stroke-width="1.15"/></svg>
<svg class="a oi" style="left:1708px;top:808px" viewBox="0 0 16 16"><path d="M3.4 3.6 A6.2 6.2 0 0 1 14.1 7.4 M14.4 2.5 V7.6 M12.6 12.4 A6.2 6.2 0 0 1 1.9 8.6 M1.6 13.5 V8.4" fill="none" stroke="currentColor" stroke-width="1.15" stroke-linecap="butt" stroke-linejoin="miter"/></svg>
<div class="a hl" style="top:846px"></div><div class="a hr" style="top:846px"></div>
</div>
<div role="row">
<div class="a nm" style="left:357px;top:860px">国家烟草专卖局关于修订印发电子烟产品技<br>术审评实施细则的通知<span class="lc lo">.doc</span></div>
<div class="a td" style="left:777px;top:868px"><span class="dg">3</span><span class="lc">.</span><span class="dg">5</span>千字符</div>
<div class="a td" style="left:938px;top:868px">本地文件</div>
<div class="a td" style="left:1071px;top:868px"><span class="dg">0</span></div>
<div class="a td" style="left:1205px;top:868px"><span class="dg">2025</span><span class="hy">-</span><span class="dg">08</span><span class="hy">-</span><span class="dg">11 11:31</span></div>
<div class="a tag" style="top:865px"><i></i><span>可用</span></div>
<div class="a sw" style="top:865px"><i></i></div>
<div class="a dv" style="top:869px"></div>
<svg class="a oi" style="left:1652px;top:869px" viewBox="0 0 16 16"><path d="M4.6 5.4 H13 M3 10.4 H11.4" fill="none" stroke="currentColor" stroke-width="1.1" stroke-linecap="round"/><circle cx="4.5" cy="5.4" r="1.55" fill="currentColor"/><circle cx="11.6" cy="10.4" r="1.55" fill="currentColor"/></svg>
<svg class="a oi" style="left:1680px;top:869px" viewBox="0 0 16 16"><path d="M1 8 C3 4.6 5.4 3.2 8 3.2 S13 4.6 15 8 C13 11.4 10.6 12.8 8 12.8 S3 11.4 1 8Z" fill="none" stroke="currentColor" stroke-width="1.15"/><circle cx="8" cy="8" r="1.7" fill="none" stroke="currentColor" stroke-width="1.15"/></svg>
<svg class="a oi" style="left:1708px;top:869px" viewBox="0 0 16 16"><path d="M3.4 3.6 A6.2 6.2 0 0 1 14.1 7.4 M14.4 2.5 V7.6 M12.6 12.4 A6.2 6.2 0 0 1 1.9 8.6 M1.6 13.5 V8.4" fill="none" stroke="currentColor" stroke-width="1.15" stroke-linecap="butt" stroke-linejoin="miter"/></svg>
<div class="a hl" style="top:907px"></div><div class="a hr" style="top:907px"></div>
</div>
</main>
</body></html>
